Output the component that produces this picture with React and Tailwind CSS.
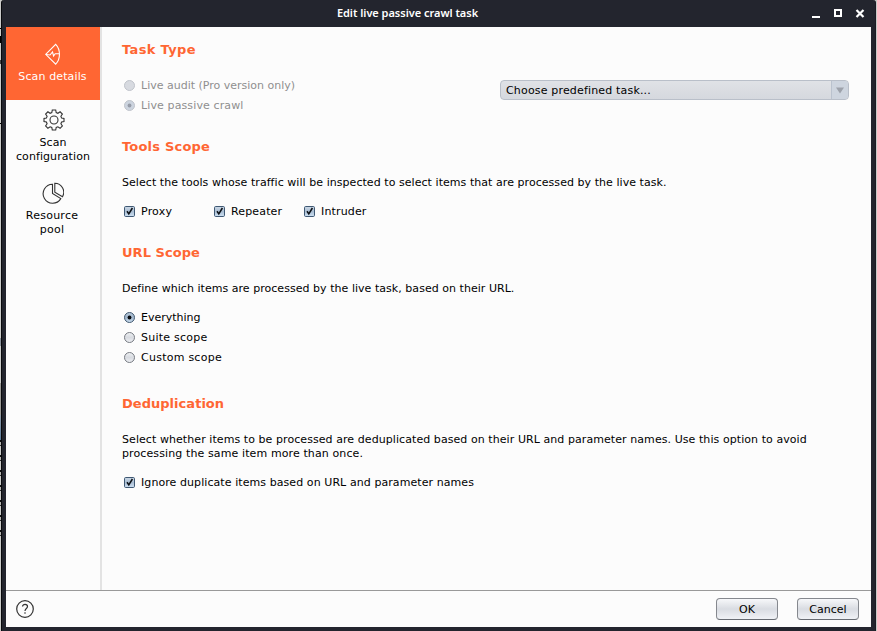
import React from 'react';

function Check({ label, className = '', spacing = 'tracking-[0.15px]' }) {
  return (
    <div className={`flex h-5 items-center ${className}`}>
      <svg className="ml-[2px] mt-px mr-[6px] shrink-0" width="11" height="11" viewBox="0 0 11 11">
        <defs>
          <linearGradient id="checkFill" x1="0" y1="0" x2="0" y2="1">
            <stop offset="0" stopColor="#ccd9e7" />
            <stop offset="0.5" stopColor="#a9bdd2" />
            <stop offset="1" stopColor="#cfe2f5" />
          </linearGradient>
        </defs>
        <rect x="0.5" y="0.5" width="10" height="10" rx="1.2" fill="url(#checkFill)" stroke="#3f5873" />
        <path d="M3 5.3 L4.8 7.8 L8.4 2" fill="none" stroke="#0b0f14" strokeWidth="1.5" />
      </svg>
      <span className={`pt-[2px] whitespace-nowrap ${spacing}`}>{label}</span>
    </div>
  );
}

function Radio({ label, selected, disabled, spacing = '' }) {
  const stroke = disabled ? '#bfc3ca' : selected ? '#41586f' : '#777b82';
  const fill = disabled
    ? selected ? '#ccd4df' : '#d7dae0'
    : selected ? 'url(#radioOn)' : 'url(#radioOff)';
  return (
    <div className={`flex h-5 items-center ${disabled ? 'text-[#8f8f8f]' : ''}`}>
      <svg className="ml-[2px] mt-px mr-[6px] shrink-0" width="11" height="11" viewBox="0 0 11 11">
        <defs>
          <linearGradient id="radioOn" x1="0" y1="0" x2="0" y2="1">
            <stop offset="0" stopColor="#b9cadb" />
            <stop offset="0.5" stopColor="#9fb4ca" />
            <stop offset="1" stopColor="#cde0f2" />
          </linearGradient>
          <linearGradient id="radioOff" x1="0" y1="0" x2="0" y2="1">
            <stop offset="0" stopColor="#eff1f4" />
            <stop offset="0.5" stopColor="#d8dbe1" />
            <stop offset="1" stopColor="#eef0f4" />
          </linearGradient>
        </defs>
        <circle cx="5.5" cy="5.5" r="5" fill={fill} stroke={stroke} />
        {selected && <circle cx="5.5" cy="5.5" r="1.9" fill={disabled ? '#969ca8' : '#06090d'} />}
      </svg>
      <span className={`pt-[2px] whitespace-nowrap ${spacing}`}>{label}</span>
    </div>
  );
}

function Heading({ children, className = '' }) {
  return <h2 className={`h-4 whitespace-nowrap text-[13px] leading-4 font-bold text-[#ff6633] ${className}`}>{children}</h2>;
}

function Button({ children }) {
  return (
    <button className="h-[22px] w-[62px] rounded-[4px] border border-[#85888e] border-b-[#686c73] bg-linear-to-b from-[#f7f8fa] via-[#d9dce2] to-[#f0f2f6] pt-px text-center leading-[20px]">
      {children}
    </button>
  );
}

export default function App() {
  return (
    <div className="flex h-[631px] w-[877px] overflow-hidden bg-[#c9cac8] font-['DejaVu_Sans',sans-serif] text-[11px] leading-[14px] text-black">
      <div className="flex w-px shrink-0 flex-col">
        <div className="h-[28px]" />
        <div className="h-px bg-black" />
        <div className="h-[7px]" />
        <div className="h-[7px] bg-black" />
        <div className="h-[17px]" />
        <div className="h-[4px] bg-[#444]" />
        <div className="h-[59px]" />
        <div className="h-px bg-black" />
        <div className="h-[214px]" />
        <div className="h-[8px] bg-[#8b929b]" />
        <div className="h-[37px]" />
        <div className="h-[32px] bg-[#9b9a96]" />
        <div className="h-[25px] bg-linear-to-b from-[#8f9ba8] to-[#5c7c9c]" />
        <div className="h-[100px] bg-[repeating-linear-gradient(to_bottom,#111_0px,#111_2px,#b5b5b2_2px,#b5b5b2_5px,#333_5px,#333_6px,#c9cac8_6px,#c9cac8_15px)]" />
      </div>
      <div className="flex w-[875px] shrink-0 flex-col rounded-t-[3px] border-x border-[#08090c] border-r-[#1b1c24] bg-[#23252e] pb-[4px]">
        <header className="flex h-[27px] shrink-0 items-center">
          <div className="flex-1 pb-[2px] pl-px text-center font-['Noto_Sans',sans-serif] text-[11px] font-semibold tracking-[-0.03px] text-white">
            Edit live passive crawl task
          </div>
          <svg className="mr-[9px] shrink-0" width="54" height="10" viewBox="0 0 54 10">
            <path d="M0 8h8" stroke="#fff" strokeWidth="2" />
            <rect x="23" y="1" width="6" height="6" fill="none" stroke="#fff" strokeWidth="2" />
            <path d="M44.500 1l7 7M51.500 1l-7 7" stroke="#fff" strokeWidth="2.200" />
          </svg>
        </header>
        <div className="mr-[4px] ml-[4px] flex min-h-0 flex-1 flex-col bg-[#fcfcfc]">
          <div className="flex h-[563px] shrink-0">
            <nav className="flex w-[94px] shrink-0 flex-col text-center">
              <div className="flex h-[73px] flex-col items-center bg-[#ff6633] pt-[16px] text-white">
                <svg width="18" height="22" viewBox="0 0 18 22" fill="none" stroke="#fff" strokeWidth="1.1">
                  <path d="M1.700 11.300L11.700 1.300C16.700 6.500 16.700 16 11.700 21.200Z" />
                  <path d="M2 11.500L6 12L8.500 9L9.600 13L11.200 10.800H15" />
                </svg>
                <span className="mt-[5px] pr-px tracking-[0.12px]">Scan details</span>
              </div>
              <div className="flex h-[73px] flex-col items-center pt-[9px]">
                <svg className="ml-px" width="22" height="22" viewBox="0 0 22 22" fill="none" stroke="#333" strokeWidth="1.1">
                  <path d="M9.3 1h3.4l.5 2.6 1.7.7 2.2-1.5 2.3 2.3-1.5 2.2.7 1.8 2.4.4v3l-2.4.5-.7 1.8 1.5 2.2-2.3 2.3-2.2-1.5-1.7.7-.5 2.5H9.3l-.5-2.5-1.7-.7-2.2 1.5L2.600 17l1.500-2.200-.7-1.800-2.400-.5v-3l2.400-.4.7-1.800-1.500-2.200 2.300-2.300 2.200 1.500 1.700-.7z" />
                  <circle cx="11" cy="11" r="4" />
                </svg>
                <span className="mt-[5px] tracking-[0.08px]">Scan<br />configuration</span>
              </div>
              <div className="flex h-[73px] flex-col items-center pt-[9px]">
                <svg className="mr-px" width="22" height="22" viewBox="0 0 22 22" fill="none" stroke="#333" strokeWidth="1.1">
                  <path d="M10.500 2.200A9.500 9.500 0 1 0 18.800 16.600L10.500 11.500Z" />
                  <path d="M12.800 1.200A9 9 0 0 1 20.500 14.700L12.800 10.300Z" />
                </svg>
                <span className="mt-[5px] pr-[2px] tracking-[0.25px]">Resource<br />pool</span>
              </div>
            </nav>
            <div className="w-[2px] shrink-0 bg-[#e3e3e3]" />
            <main className="flex-1 pt-[15px] pl-[20px]">
              <Heading className="tracking-[0.35px]">Task Type</Heading>
              <div className="mt-[17px] flex h-10">
                <div className="w-[378px]">
                  <Radio label="Live audit (Pro version only)" disabled />
                  <Radio label="Live passive crawl" selected disabled spacing="tracking-[0.12px]" />
                </div>
                <div className="mt-[5px] flex h-[20px] w-[349px] overflow-hidden rounded-[4px] border border-[#b9bfc9] bg-linear-to-b from-[#e0e2e6] to-[#d5d8de]">
                  <span className="flex-1 pl-[5px] leading-[19px] tracking-[0.17px]">Choose predefined task...</span>
                  <span className="flex w-[17px] items-center justify-center border-l border-[#bac2ce] bg-[#ced5df]">
                    <svg width="8" height="7" viewBox="0 0 8 7"><path d="M0 0.500H8L4 6.500Z" fill="#9da2ab" /></svg>
                  </span>
                </div>
              </div>
              <Heading className="mt-[24px] tracking-[0.2px]">Tools Scope</Heading>
              <p className="mt-[21px] tracking-[0.053px] whitespace-nowrap">Select the tools whose traffic will be inspected to select items that are processed by the live task.</p>
              <div className="mt-[11px] flex">
                <Check label="Proxy" className="w-[90px]" spacing="tracking-[0.2px]" />
                <Check label="Repeater" className="w-[90px]" />
                <Check label="Intruder" className="w-[90px]" />
              </div>
              <Heading className="mt-[24px] tracking-[0.05px]">URL Scope</Heading>
              <p className="mt-[21px] tracking-[0.038px] whitespace-nowrap">Define which items are processed by the live task, based on their URL.</p>
              <div className="mt-[11px]">
                <Radio label="Everything" selected />
                <Radio label="Suite scope" spacing="tracking-[0.23px]" />
                <Radio label="Custom scope" spacing="tracking-[0.25px]" />
              </div>
              <Heading className="mt-[29px] tracking-[0.03px]">Deduplication</Heading>
              <p className="mt-[21px] whitespace-nowrap">
                <span className="tracking-[0.07px]">Select whether items to be processed are deduplicated based on their URL and parameter names. Use this option to avoid</span>
                <br />
                <span className="tracking-[0.11px]">processing the same item more than once.</span>
              </p>
              <Check label="Ignore duplicate items based on URL and parameter names" className="mt-[11px]" spacing="tracking-[0.075px]" />
            </main>
          </div>
          <footer className="flex flex-1 items-center border-t border-[#999] pr-[12px] pl-[10px]">
            <svg className="mr-auto" width="18" height="18" viewBox="0 0 18 18" fill="none" stroke="#333">
              <circle cx="9" cy="9" r="8.300" strokeWidth="1.200" />
              <path d="M6.500 6.600C6.500 3.700 11.500 3.700 11.500 6.600C11.500 8.500 9 8.600 9 11M9 12.300V13.800" strokeWidth="1.200" />
            </svg>
            <div className="flex gap-[19px]">
              <Button>OK</Button>
              <Button>Cancel</Button>
            </div>
          </footer>
        </div>
      </div>
    </div>
  );
}
